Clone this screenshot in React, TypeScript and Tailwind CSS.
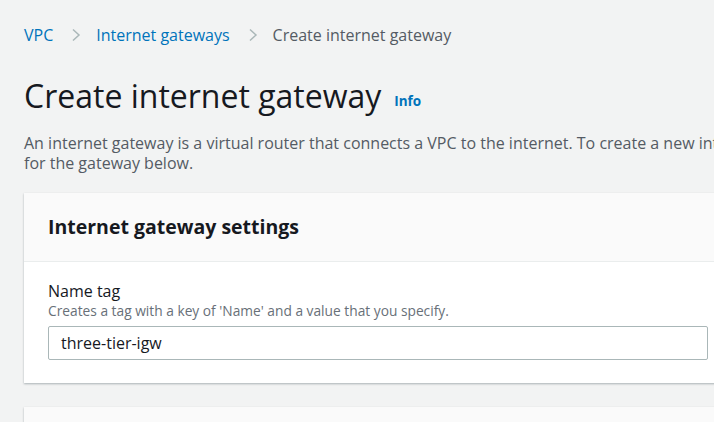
import React from "react";

function Chevron() {
  return (
    <svg width="10" height="14" viewBox="0 0 10 14" className="ml-[18px] mr-[15px]" fill="none">
      <path d="M2 1.5l6 5.5-6 5.5" stroke="#aab7b8" strokeWidth="1.5" />
    </svg>
  );
}

export default function App() {
  return (
    <div
      className="w-[714px] h-[422px] overflow-hidden bg-[#f2f3f3] text-[#16191f]"
      style={{ fontFamily: '"Open Sans", "Noto Sans", Arial, sans-serif' }}
    >
      <div className="pl-6 pt-[24px]">
        <nav className="flex items-center h-[22px] text-[16px]">
          <span className="text-[#0073bb]">VPC</span>
          <Chevron />
          <span className="text-[#0073bb]">Internet gateways</span>
          <Chevron />
          <span className="text-[#545b64]">Create internet gateway</span>
        </nav>

        <div className="flex items-baseline mt-[30px]">
          <h1 className="text-[32px] leading-[40px] font-normal">Create internet gateway</h1>
          <span className="ml-[13px] text-[13.5px] font-bold text-[#0073bb] relative -top-[2px]">Info</span>
        </div>

        <p className="mt-[17px] text-[16px] leading-[20px] text-[#545b64] whitespace-nowrap">
          An internet gateway is a virtual router that connects a VPC to the internet. To create a new internet gateway specify the name
          <br />
          for the gateway below.
        </p>

        <div className="mt-[20px] w-[720px] bg-white shadow-[0_1px_2px_rgba(0,28,36,0.3)]">
          <div className="h-[69px] bg-[#fafafa] border-b border-[#eaeded] px-6 flex items-center">
            <h2 className="text-[19.5px] font-bold">Internet gateway settings</h2>
          </div>
          <div className="px-6 pt-[18px] pb-[23px]">
            <div className="text-[16px] leading-[22px]">Name tag</div>
            <div className="text-[13.75px] leading-[18px] text-[#687078]">
              Creates a tag with a key of 'Name' and a value that you specify.
            </div>
            <div className="mt-[6px] w-[660px] h-[34px] border border-[#aab7b8] rounded-[2px] flex items-center px-3 text-[16px]">
              three-tier-igw
            </div>
          </div>
        </div>

        <div className="mt-[24px] w-[720px] h-[40px] bg-[#fafafa] shadow-[0_1px_2px_rgba(0,28,36,0.3)]" />
      </div>
    </div>
  );
}
